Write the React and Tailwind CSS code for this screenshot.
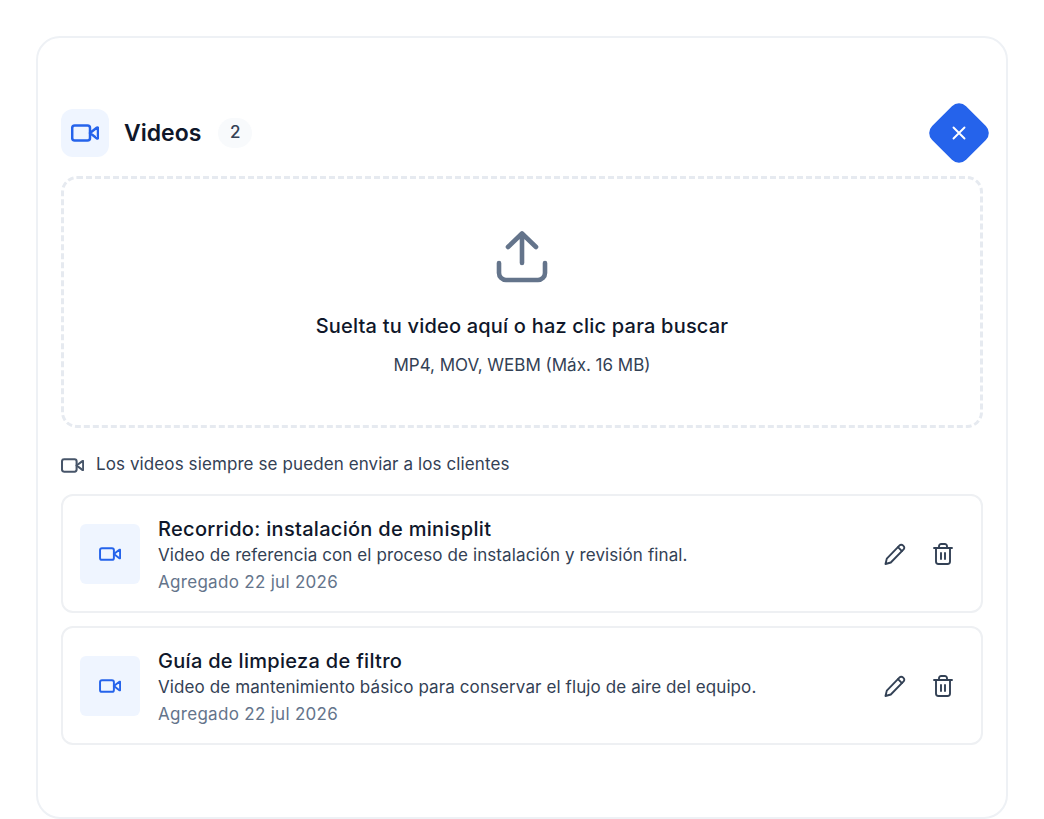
const font = { fontFamily: 'Inter, "Noto Sans", sans-serif' };

function VideoIcon({ className }) {
  return (
    <svg viewBox="0 0 28 18" fill="none" stroke="currentColor" strokeWidth="2.5" strokeLinejoin="round" strokeLinecap="round" className={className}>
      <rect x="1.2" y="1.5" width="17.8" height="15" rx="2.5" />
      <path d="M19 9 26 3.6a.6.6 0 0 1 1 .5v9.8a.6.6 0 0 1-1 .5L19 9Z" />
    </svg>
  );
}

function PencilIcon() {
  return (
    <svg viewBox="0 0 24 24" fill="none" stroke="currentColor" strokeWidth="1.9" strokeLinecap="round" strokeLinejoin="round" className="w-6 h-6">
      <path d="M2.5 22l1.3-5.4L16.6 3.4a2.3 2.3 0 0 1 3.3 0l.7.7a2.3 2.3 0 0 1 0 3.3L7.8 20.5 2.5 22Z" />
      <path d="M15 5.2l3.9 3.9" />
    </svg>
  );
}

function TrashIcon() {
  return (
    <svg viewBox="0 0 24 24" fill="none" stroke="currentColor" strokeWidth="1.9" strokeLinecap="round" strokeLinejoin="round" className="w-6 h-6">
      <path d="M3 6h18" />
      <path d="M8 6V4.2A2.2 2.2 0 0 1 10.2 2h3.6A2.2 2.2 0 0 1 16 4.2V6" />
      <path d="M5 6v13.5A2.5 2.5 0 0 0 7.5 22h9a2.5 2.5 0 0 0 2.5-2.5V6" />
      <path d="M10 11v6M14 11v6" />
    </svg>
  );
}

const videos = [
  { title: 'Recorrido: instalación de minisplit', desc: 'Video de referencia con el proceso de instalación y revisión final.' },
  { title: 'Guía de limpieza de filtro', desc: 'Video de mantenimiento básico para conservar el flujo de aire del equipo.' },
];

export default function App() {
  return (
    <div style={font} className="bg-white h-[819px] overflow-hidden pl-9 pr-9 pt-9">
      <div className="h-[783px] border-2 border-[#eef1f5] rounded-[24px] pl-[23px] pr-[23px] pt-[71px]">
        <div className="flex items-center justify-between h-12">
          <div className="flex items-center">
            <div className="w-12 h-12 rounded-xl bg-[#eff5ff] flex items-center justify-center text-[#2563eb]">
              <VideoIcon className="w-7 h-[18px]" />
            </div>
            <h2 className="ml-[15px] text-[23px] font-semibold text-[#0f172a]">Videos</h2>
            <span className="ml-[17px] w-[34px] h-[30px] rounded-full bg-[#f8fafc] flex items-center justify-center text-[17px] font-medium text-[#334155]">2</span>
          </div>
          <button className="w-[48px] h-[48px] rotate-45 rounded-[10px] bg-[#2563eb] flex items-center justify-center">
            <svg viewBox="0 0 14 14" fill="none" stroke="white" strokeWidth="1.9" strokeLinecap="round" className="w-[14px] h-[14px] -rotate-45">
              <path d="M1.5 1.5l11 11M12.5 1.5l-11 11" />
            </svg>
          </button>
        </div>

        <div className="mt-[19px] h-[252px] rounded-2xl border-[3px] border-dashed border-[#e6eaf0] flex flex-col items-center pt-[52px]">
          <svg viewBox="0 0 52 52" fill="none" stroke="#64748b" strokeWidth="4.6" strokeLinecap="round" strokeLinejoin="round" className="w-[52px] h-[52px]">
            <path d="M26 32V3M12 16 26 2.5 40 16" />
            <path d="M3 32v10a7 7 0 0 0 7 7h32a7 7 0 0 0 7-7V32" />
          </svg>
          <p className="mt-[29px] text-[20px] font-medium tracking-[0.2px] text-[#0f172a] leading-7">Suelta tu video aquí o haz clic para buscar</p>
          <p className="mt-[13px] text-[17px] text-[#334155] leading-6">MP4, MOV, WEBM (Máx. 16 MB)</p>
        </div>

        <div className="mt-[25px] flex items-center h-6 text-[#334155]">
          <VideoIcon className="w-[23px] h-[15px] text-[#475569]" />
          <span className="ml-3 text-[17px] tracking-[0.1px]">Los videos siempre se pueden enviar a los clientes</span>
        </div>

        <div className="mt-[17px] flex flex-col gap-[13px]">
          {videos.map((v) => (
            <div key={v.title} className="h-[119px] rounded-xl border-2 border-[#eef0f3] flex items-center pl-[17px] pr-[15px]">
              <div className="w-[60px] h-[60px] rounded-md bg-[#eff5ff] flex items-center justify-center text-[#2563eb]">
                <VideoIcon className="w-[22px] h-[14px]" />
              </div>
              <div className="ml-[18px] flex-1 pt-[2px]">
                <p className="text-[20px] font-medium tracking-[0.3px] text-[#0f172a] leading-7">{v.title}</p>
                <p className="text-[17px] tracking-[0.1px] text-[#334155] leading-6">{v.desc}</p>
                <p className="mt-[3px] text-[17px] tracking-[0.3px] text-[#64748b] leading-6">Agregado 22 jul 2026</p>
              </div>
              <div className="flex items-center gap-6 text-[#334155] pr-[11px]">
                <PencilIcon />
                <TrashIcon />
              </div>
            </div>
          ))}
        </div>
      </div>
    </div>
  );
}
